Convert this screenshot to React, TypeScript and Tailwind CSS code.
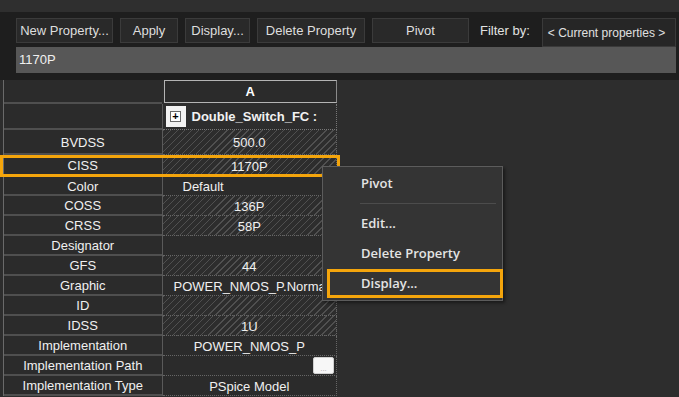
import React from "react";

interface PropRow {
  label: string;
  value?: string;
  hatch?: boolean;
  left?: boolean;
  h: string;
  selected?: boolean;
  browse?: boolean;
}

const rows: PropRow[] = [
  { label: "BVDSS", value: "500.0", hatch: true, h: "h-[25px]" },
  { label: "CISS", value: "1170P", hatch: true, h: "h-[22px]", selected: true },
  { label: "Color", value: "Default", left: true, h: "h-[19px]" },
  { label: "COSS", value: "136P", hatch: true, h: "h-[20px]" },
  { label: "CRSS", value: "58P", hatch: true, h: "h-[20px]" },
  { label: "Designator", h: "h-[20px]" },
  { label: "GFS", value: "44", hatch: true, h: "h-[20px]" },
  { label: "Graphic", value: "POWER_NMOS_P.Normal", left: true, h: "h-[20px]" },
  { label: "ID", hatch: true, h: "h-[20px]" },
  { label: "IDSS", value: "1U", hatch: true, h: "h-[20px]" },
  { label: "Implementation", value: "POWER_NMOS_P", h: "h-[20px]" },
  { label: "Implementation Path", browse: true, h: "h-[20px]" },
  { label: "Implementation Type", value: "PSpice Model", h: "h-[20px]" },
];

const hatchBg =
  "bg-[repeating-linear-gradient(135deg,#505050_0px,#505050_1px,transparent_1px,transparent_5px)]";

const ToolButton = ({ label, w }: { label: string; w: string }) => (
  <div
    className={`${w} h-[25px] flex items-center justify-center bg-[#292929] border border-[#3b3b3b] text-[#dedede] text-[13px] whitespace-nowrap`}
  >
    {label}
  </div>
);

export default function App() {
  return (
    <div className="relative w-[679px] h-[397px] overflow-hidden bg-[#2d2d2d] font-['Liberation_Sans',Arial,sans-serif] select-none">
      <div className="h-[12px] bg-[#2f2f2f]" />

      {/* toolbar */}
      <div className="h-[68px] bg-[#1e1e1e] pl-[16px] pt-[6px]">
        <div className="flex items-start h-[29px] gap-[7px]">
          <ToolButton label="New Property..." w="w-[97px]" />
          <ToolButton label="Apply" w="w-[58px]" />
          <ToolButton label="Display..." w="w-[65px]" />
          <ToolButton label="Delete Property" w="w-[108px]" />
          <ToolButton label="Pivot" w="w-[97px]" />
          <span className="ml-[4px] h-[25px] flex items-center text-[13px] text-[#e2e2e2]">
            Filter by:
          </span>
          <div className="ml-[5px] w-[134px] h-[29px] flex items-center pl-[5px] bg-[#262626] border border-[#3a3a3a] text-[12px] text-[#e0e0e0] whitespace-nowrap">
            &lt; Current properties &gt;
          </div>
        </div>
        <div className="w-[660px] h-[26px] flex items-center pl-[3px] bg-[#575757] text-[13px] text-[#f0f0f0]">
          1170P
        </div>
      </div>

      {/* property grid */}
      <div className="ml-[3px] w-[334px] border-l border-[#6a6a6a]">
        {/* column header */}
        <div className="flex h-[24px]">
          <div className="w-[158px] bg-[#2b2b2b] border-b-2 border-[#4f4f4f]" />
          <div className="w-[176px] pl-[2px]">
            <div className="h-[23px] border border-[#b4b4b4] border-r-[#8a8a8a] flex items-center justify-center font-bold text-[13px] text-white bg-[#2b2b2b]">
              A
            </div>
          </div>
        </div>
        {/* part row */}
        <div className="flex h-[26px]">
          <div className="w-[158px] bg-[#2b2b2b] border-b-2 border-[#4f4f4f]" />
          <div className="w-[1px] bg-[#5a5a5a]" />
          <div className="w-[175px] flex items-center gap-[6px] pl-[3px] border-b border-dotted border-[#777] border-r">
            <div className="w-[20px] h-[21px] bg-[#f2f2f2] flex items-center justify-center">
              <div className="w-[11px] h-[11px] border border-[#6a6a6a] bg-white flex items-center justify-center text-[11px] leading-none text-black font-bold">
                +
              </div>
            </div>
            <span className="font-bold text-[13px] text-[#f2f2f2] whitespace-nowrap">
              Double_Switch_FC :
            </span>
          </div>
        </div>

        {rows.map((r) => (
          <div key={r.label} className={`relative flex ${r.h}`}>
            <div className="w-[158px] pt-[2px] bg-[#2b2b2b] border-b-2 border-[#4f4f4f] flex items-center justify-center text-[13px] text-[#f0f0f0] whitespace-nowrap">
              {r.label}
            </div>
            <div className="w-[1px] bg-[#5a5a5a]" />
            <div
              className={`w-[175px] pt-[2px] overflow-hidden flex items-center border-b border-r border-dotted border-[#666] text-[13px] text-[#f0f0f0] whitespace-nowrap ${
                r.hatch ? hatchBg : "bg-[#2b2b2b]"
              } ${r.left ? (r.label === "Color" ? "pl-[20px]" : "pl-[11px]") : "justify-center"}`}
            >
              {r.value}
              {r.browse && (
                <div className="ml-auto mr-[2px] -mt-[2px] w-[21px] h-[17px] shrink-0 bg-[#f7f7f7] border border-[#d0d0d0] rounded-[2px] flex items-end justify-center text-[8px] leading-[9px] text-[#aaa]">
                  ...
                </div>
              )}
            </div>
            {r.selected && (
              <div className="absolute left-[-4px] right-[-3px] top-0 bottom-0 border-[3px] border-[#f4a50c]" />
            )}
          </div>
        ))}
      </div>

      {/* context menu */}
      <div className="absolute left-[322px] top-[166px] w-[181px] h-[135px] bg-[#343434] border border-[#5c5c5c] shadow-[2px_2px_3px_rgba(0,0,0,0.45)] pt-[3px] pl-[4px] font-['Open_Sans',sans-serif] text-[13px] font-semibold text-[#e4e4e4]">
        <div className="h-[28px] flex items-center pl-[34px]">Pivot</div>
        <div className="h-[11px] flex items-center pl-[33px] pr-[6px]">
          <div className="h-[1px] w-full bg-[#4c4c4c]" />
        </div>
        <div className="h-[30px] flex items-center pl-[34px]">Edit...</div>
        <div className="h-[30px] flex items-center pl-[34px]">Delete Property</div>
        <div className="h-[29px] -mr-[1px] flex items-center pl-[31px] border-[3px] border-[#f4a50c]">
          Display...
        </div>
      </div>
    </div>
  );
}
